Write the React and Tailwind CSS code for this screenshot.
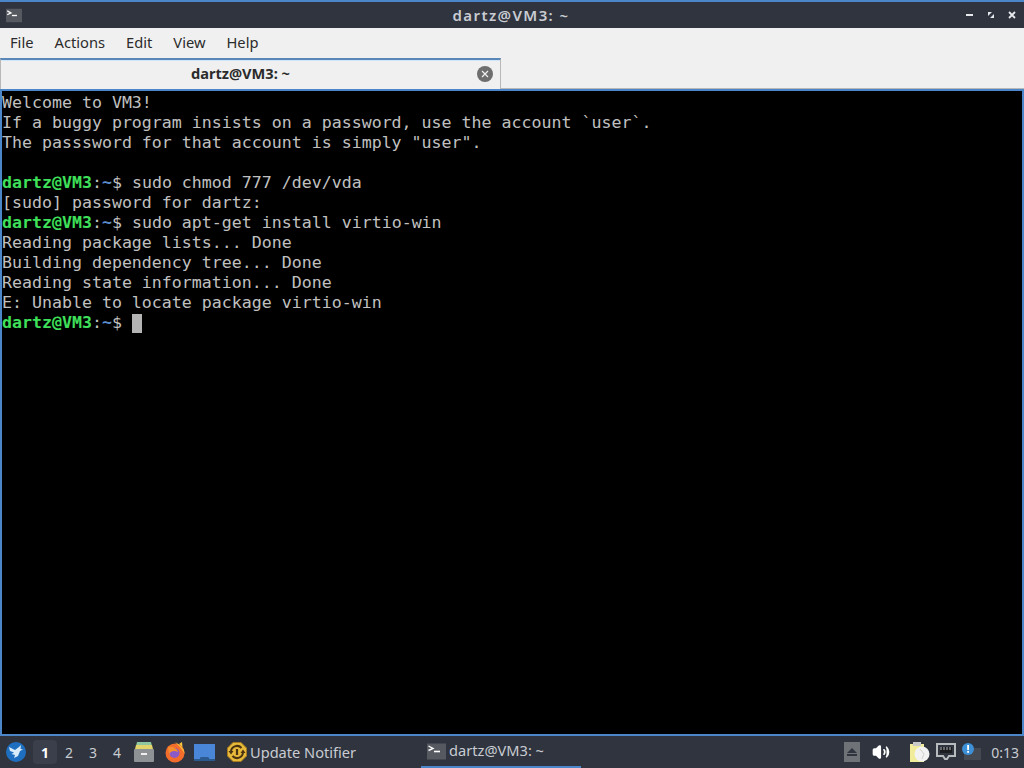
import { Volume2 } from 'lucide-react';

const SANS = "font-['Noto_Sans',sans-serif]";

function TermIcon({ className }) {
  return (
    <svg viewBox="0 0 19 16" className={className}>
      <rect width="19" height="16" fill="#565a60" />
      <path d="M1.5 2.5 L6 5 L1.5 7" stroke="#fff" strokeWidth="1.4" fill="none" />
      <path d="M7 8 H13" stroke="#fff" strokeWidth="1.6" />
    </svg>
  );
}

function Prompt({ children }) {
  return (
    <div className="h-5 whitespace-pre">
      <span className="font-bold text-[#3fe05a]">dartz@VM3</span>
      <span>:</span>
      <span className="font-bold text-[#5c8fd0]">~</span>
      <span>$ {children}</span>
    </div>
  );
}

function Line({ children }) {
  return <div className="h-5 whitespace-pre">{children}</div>;
}

function TitleBar() {
  return (
    <div className="flex h-[28px] items-center justify-between border-t-2 border-[#4a86c8] bg-[#2f343f] pl-[6px] pr-[8px]">
      <TermIcon className="h-[15px] w-[16px]" />
      <span className={`${SANS} ml-[34px] text-[15px] font-semibold tracking-[1.4px] text-[#c9ccd2]`}>dartz@VM3: ~</span>
      <div className="flex items-center gap-[13px]">
        <svg viewBox="0 0 8 8" className="h-2 w-2"><rect y="3" width="7" height="2" fill="#e6e8eb" /></svg>
        <svg viewBox="0 0 8 8" className="h-2 w-2">
          <path d="M1 1 H5 L1 5 Z M7 7 H3 L7 3 Z" fill="#e6e8eb" />
        </svg>
        <svg viewBox="0 0 8 8" className="h-2 w-2"><path d="M1 1 L7 7 M7 1 L1 7" stroke="#e6e8eb" strokeWidth="1.8" /></svg>
      </div>
    </div>
  );
}

function MenuBar() {
  return (
    <div className={`${SANS} flex h-[30px] items-center gap-[21px] bg-[#f0f0f0] pb-[2px] pl-[10px] text-[14.7px] text-[#2b2b2b]`}>
      <span>File</span>
      <span>Actions</span>
      <span>Edit</span>
      <span>View</span>
      <span>Help</span>
    </div>
  );
}

function TabBar() {
  return (
    <div className="flex h-[31px] bg-[#f0f0f0]">
      <div className="flex h-[31px] w-[501px] items-center border-x border-[#b8b8b8] border-t-2 border-t-[#5a86b8] bg-[#f0f0f0] pb-[1px] shadow-[inset_0_1px_0_#cfe6f8]">
        <span className={`${SANS} ml-[190px] text-[14.6px] font-bold text-[#2b2b2b]`}>dartz@VM3: ~</span>
        <span className="ml-auto mr-[7px] flex h-4 w-4 items-center justify-center rounded-full bg-[#6e6e6e]">
          <svg viewBox="0 0 8 8" className="h-2 w-2"><path d="M1 1 L7 7 M7 1 L1 7" stroke="#f0f0f0" strokeWidth="1.2" /></svg>
        </span>
      </div>
      <div className="flex-1 border-b border-[#b8b8b8]" />
    </div>
  );
}

function Terminal() {
  return (
    <div className="h-[647px] border-x-2 border-y-2 border-[#4a86c8] bg-black pt-[2px] font-['DejaVu_Sans_Mono',monospace] text-[16.6px] leading-5 text-[#c0c0c0]">
      <Line>Welcome to VM3!</Line>
      <Line>If a buggy program insists on a password, use the account `user`.</Line>
      <Line>The passsword for that account is simply "user".</Line>
      <Line> </Line>
      <Prompt>sudo chmod 777 /dev/vda</Prompt>
      <Line>[sudo] password for dartz:</Line>
      <Prompt>sudo apt-get install virtio-win</Prompt>
      <Line>Reading package lists... Done</Line>
      <Line>Building dependency tree... Done</Line>
      <Line>Reading state information... Done</Line>
      <Line>E: Unable to locate package virtio-win</Line>
      <div className="flex h-5 items-center">
        <Prompt />
        <span className="h-[19px] w-[10px] bg-[#b4b4b4]" />
      </div>
    </div>
  );
}

function StartIcon() {
  return (
    <svg viewBox="0 0 20 20" className="h-5 w-5">
      <circle cx="10" cy="10" r="10" fill="#1e6fc0" />
      <path d="M3 5 L9 8 L13 5 L15 3 L14.5 7 L17 7.5 L14 9 L12 14 L8 16 L9 13 L5.5 12 L8 10.5 L4 9 Z" fill="#d8ecfa" />
    </svg>
  );
}

function FilesIcon() {
  return (
    <svg viewBox="0 0 22 22" className="h-[22px] w-[22px]">
      <path d="M4 1 H18 L19 5 H3 Z" fill="#8fc7a0" />
      <path d="M3 4 H19 L20 8 H2 Z" fill="#e2d36a" />
      <rect x="1" y="8" width="20" height="13" rx="1" fill="#8e9294" />
      <rect x="8" y="12" width="6" height="2" fill="#f0f0f0" />
    </svg>
  );
}

function FirefoxIcon() {
  return (
    <svg viewBox="0 0 22 22" className="h-[22px] w-[22px]">
      <circle cx="11" cy="12" r="9.5" fill="#f26d2b" />
      <path d="M11 1 C17 4 21 8 20.5 13 C19 9 16 6 11 1 Z" fill="#fbb33a" />
      <path d="M15 3 L18 1 L18.5 6 Z" fill="#fbc53c" />
      <circle cx="10.5" cy="12" r="5" fill="#8a5ac8" />
      <path d="M4 6 C8 5 13 7 14 11 C10 9 7 10 5 13 Z" fill="#f58c2e" />
    </svg>
  );
}

function DesktopIcon() {
  return (
    <svg viewBox="0 0 21 17" className="h-[17px] w-[21px]">
      <path d="M0 0 H21 V15 H15 L14 13 H7 L6 15 H0 Z" fill="#4a86d8" />
      <path d="M0 15 H6 L7 13 H14 L15 15 H21 V17 H0 Z" fill="#2a5a90" />
    </svg>
  );
}

function UpdateIcon() {
  return (
    <svg viewBox="0 0 22 22" className="h-[22px] w-[22px]">
      <path d="M7 1.5 H15 L20.5 7 V15 L15 20.5 H7 L1.5 15 V7 Z" fill="#e6b93a" stroke="#a87c1c" strokeWidth="1" />
      <path d="M5 11 A6 6 0 0 1 15.5 7" fill="none" stroke="#4a3312" strokeWidth="2" />
      <path d="M17 11 A6 6 0 0 1 6.5 15" fill="none" stroke="#4a3312" strokeWidth="2" />
      <path d="M2.5 10 L7.5 10 L5 13.5 Z M14.5 12 L19.5 12 L17 8.5 Z" fill="#4a3312" />
      <path d="M11 8 V14" stroke="#4a3312" strokeWidth="2.2" />
    </svg>
  );
}

function Tray() {
  return (
    <div className="ml-auto flex items-center">
      <span className="flex h-[20px] w-4 flex-col items-center justify-center bg-[#6f7276]">
        <span className="h-0 w-0 border-x-[5px] border-b-[5px] border-x-transparent border-b-[#2f343f]" />
        <span className="mt-[1px] h-[2px] w-[10px] bg-[#2f343f]" />
      </span>
      <Volume2 className="ml-[12px] h-[18px] w-[18px] fill-white text-white" strokeWidth={2.2} />
      <svg viewBox="0 0 22 22" className="ml-[19px] h-[22px] w-[22px]">
        <rect x="1" y="3" width="14" height="18" fill="#f1ec9a" />
        <rect x="4" y="1" width="8" height="4" fill="#c9c9c9" />
        <circle cx="13" cy="13" r="7.5" fill="#f2f2f2" />
        <path d="M11 8 L15 13 L13 18" stroke="#cfcfcf" fill="none" />
      </svg>
      <svg viewBox="0 0 20 18" className="ml-[5px] h-[18px] w-5">
        <path d="M1 1 H19 V13 H13 L11 16 H9 L7 13 H1 Z" fill="none" stroke="#b8bbbe" strokeWidth="2" />
        <rect x="4" y="4" width="12" height="6" fill="#1a1c20" />
        <path d="M5 4 V7 M8 4 V7 M11 4 V7 M14 4 V7" stroke="#b8bbbe" />
      </svg>
      <svg viewBox="0 0 20 20" className="ml-[5px] h-5 w-5">
        <rect x="3" y="6" width="17" height="12" fill="#454a52" />
        <circle cx="7" cy="7" r="6" fill="#3d8fd6" />
        <rect x="6.2" y="3" width="1.8" height="5" fill="#fff" />
        <rect x="6.2" y="9" width="1.8" height="1.8" fill="#fff" />
      </svg>
      <span className="ml-[10px] mr-[5px] pt-[1px] text-[14px] text-[#c9ccd2]">0:13</span>
    </div>
  );
}

function Taskbar() {
  return (
    <div className={`${SANS} flex h-[32px] items-center bg-[#2f343f] text-[#c9ccd2]`}>
      <div className="ml-[6px]"><StartIcon /></div>
      <div className="ml-[7px] flex items-center text-[14px]">
        <span className="flex h-[24px] w-[24px] items-center justify-center rounded-sm bg-[#3a3f4b] pt-[1px] font-bold text-white">1</span>
        <span className="flex w-[24px] justify-center pt-[1px]">2</span>
        <span className="flex w-[24px] justify-center pt-[1px]">3</span>
        <span className="flex w-[24px] justify-center pt-[1px]">4</span>
      </div>
      <div className="ml-[4px]"><FilesIcon /></div>
      <div className="ml-[9px]"><FirefoxIcon /></div>
      <div className="ml-[8px]"><DesktopIcon /></div>
      <div className="ml-[11px]"><UpdateIcon /></div>
      <span className="ml-[2px] pt-[1px] text-[14.6px]">Update Notifier</span>
      <div className="ml-[65px] flex h-[32px] w-[160px] items-center border-b-2 border-[#4a86c8] pl-[6px]">
        <TermIcon className="h-[17px] w-[19px]" />
        <span className="ml-[3px] text-[14.6px]">dartz@VM3: ~</span>
      </div>
      <Tray />
    </div>
  );
}

export default function App() {
  return (
    <div className="flex h-[768px] w-[1024px] flex-col overflow-hidden bg-[#2f343f]">
      <TitleBar />
      <MenuBar />
      <TabBar />
      <Terminal />
      <Taskbar />
    </div>
  );
}
